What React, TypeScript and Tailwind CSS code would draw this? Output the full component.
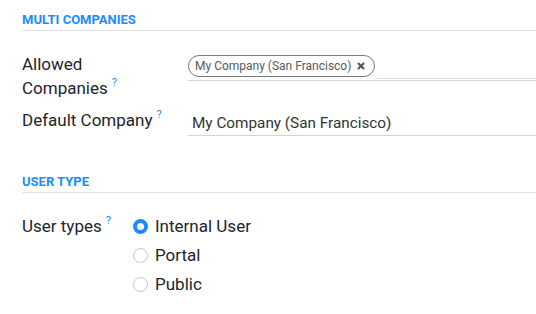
import { X } from "lucide-react";

function Help() {
  return (
    <span className="relative -top-[8px] ml-[4px] text-[11px] leading-none text-[#1a8cff]">
      ?
    </span>
  );
}

function Separator({ title }: { title: string }) {
  return (
    <div className="border-b border-[#e2e2e2] pb-[3px] text-[13px] font-bold uppercase text-[#1a8cff] leading-[14px]">
      {title}
    </div>
  );
}

function Radio({ label, checked }: { label: string; checked?: boolean }) {
  return (
    <label className="flex items-center gap-[7px] h-[29px] leading-[29px]">
      {checked ? (
        <span className="w-[15px] h-[15px] rounded-full border-[4px] border-[#1a8cff] bg-white" />
      ) : (
        <span className="w-[15px] h-[15px] rounded-full border border-[#c4c4c4] bg-white" />
      )}
      <span>{label}</span>
    </label>
  );
}

export default function App() {
  return (
    <div
      className="w-[536px] h-[314px] bg-white pl-[22px] pt-[13px] text-[17px] text-[#212529]"
      style={{ fontFamily: "Roboto, sans-serif" }}
    >
      <Separator title="Multi Companies" />

      <div className="flex mt-[21px]">
        <div className="w-[166px] leading-[24px]">
          Allowed
          <br />
          Companies
          <Help />
        </div>
        <div className="flex-1 self-start flex items-start border-b border-[#d4d4d4] pt-[3px] h-[29px]">
          <span className="flex items-center gap-[5px] h-[22px] rounded-full border border-[#7a7a7a] pl-[6px] pr-[8px] text-[12px] text-[#5a5a5a] whitespace-nowrap">
            My Company (San Francisco)
            <X className="w-[10px] h-[10px] text-[#555]" strokeWidth={5} />
          </span>
          <span className="flex-1 ml-[2px] h-[24px] border-b border-[#e0e0e0]" />
        </div>
      </div>

      <div className="flex mt-[8px]">
        <div className="w-[166px] leading-[24px]">
          Default Company
          <Help />
        </div>
        <div className="flex-1 border-b border-[#d4d4d4] pl-[4px] pt-[3px] text-[15.3px] leading-[24px] text-[#333]">
          My Company (San Francisco)
        </div>
      </div>

      <div className="mt-[39px]">
        <Separator title="User Type" />
      </div>

      <div className="flex mt-[19px]">
        <div className="w-[111px] leading-[24px] pt-[2px]">
          User types
          <Help />
        </div>
        <div className="flex flex-col">
          <Radio label="Internal User" checked />
          <Radio label="Portal" />
          <Radio label="Public" />
        </div>
      </div>
    </div>
  );
}
